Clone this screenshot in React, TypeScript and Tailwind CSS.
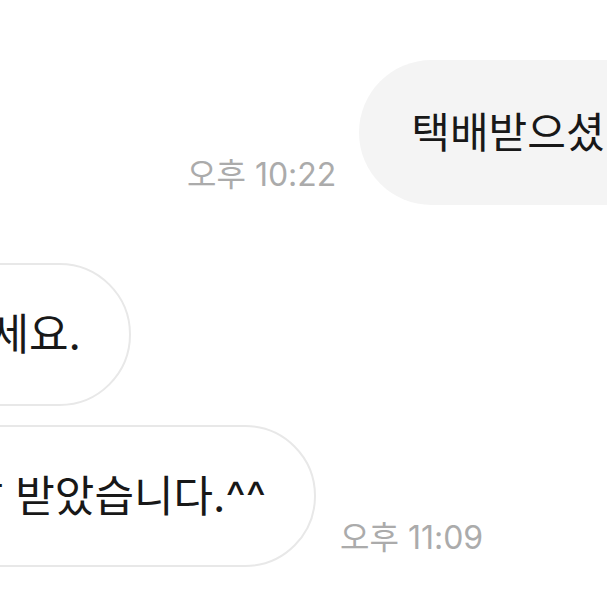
export default function App() {
  return (
    <div className="w-[607px] h-[607px] overflow-hidden bg-white font-['Inter','Noto_Sans_CJK_KR',sans-serif] text-[#181818]">
      <div className="flex items-end pt-[60px] pl-[187px]">
        <span className="mb-[14px] text-[32px] leading-none text-[#ababab] whitespace-nowrap shrink-0">
          오후 10:22
        </span>
        <div className="ml-[23px] h-[145px] shrink-0 flex items-center rounded-full bg-[#f4f4f4] pl-[52px] pr-[52px] text-[42px] whitespace-nowrap">
          택배받으셨나요?
        </div>
      </div>

      <div className="mt-[58px] w-[131px] flex justify-end">
        <div className="h-[143px] shrink-0 flex items-center rounded-full border-2 border-[#e8e8e8] bg-white pl-[52px] pr-[48px] text-[43px] whitespace-nowrap">
          확인해주세요.
        </div>
      </div>

      <div className="mt-[19px] flex items-end">
        <div className="w-[316px] flex justify-end shrink-0">
          <div className="h-[142px] shrink-0 flex items-center rounded-full border-2 border-[#e8e8e8] bg-white pl-[52px] pr-[48px] text-[43px] whitespace-nowrap">
            잘 받았습니다.^^
          </div>
        </div>
        <span className="ml-[24px] mb-[13px] text-[32px] leading-none text-[#ababab] whitespace-nowrap shrink-0">
          오후 11:09
        </span>
      </div>
    </div>
  );
}
